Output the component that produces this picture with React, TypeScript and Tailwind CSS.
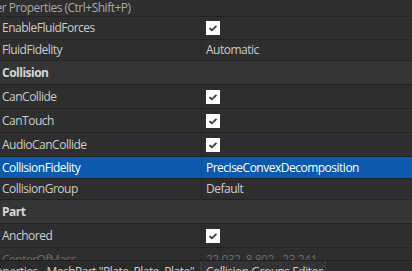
import React from "react";

type Row =
  | { kind: "cat"; name: string; h: number }
  | { kind: "bool"; name: string; h: number }
  | { kind: "text"; name: string; value: string; h: number; selected?: boolean; faded?: boolean };

const rows: Row[] = [
  { kind: "bool", name: "EnableFluidForces", h: 23 },
  { kind: "text", name: "FluidFidelity", value: "Automatic", h: 21 },
  { kind: "cat", name: "Collision", h: 24 },
  { kind: "bool", name: "CanCollide", h: 24 },
  { kind: "bool", name: "CanTouch", h: 24 },
  { kind: "bool", name: "AudioCanCollide", h: 24 },
  { kind: "text", name: "CollisionFidelity", value: "PreciseConvexDecomposition", h: 22, selected: true },
  { kind: "text", name: "CollisionGroup", value: "Default", h: 21 },
  { kind: "cat", name: "Part", h: 24 },
  { kind: "bool", name: "Anchored", h: 24 },
  { kind: "text", name: "CenterOfMass", value: "22.032, 8.802, -23.241", h: 24, faded: true },
];

function Check() {
  return (
    <div className="flex h-[14px] w-[14px] items-center justify-center bg-white">
      <svg width="10" height="8" viewBox="0 0 10 8">
        <path d="M1.5 4.2 L3.8 6.3 L8.5 1.8" fill="none" stroke="#3a3a3a" strokeWidth="1.8" />
      </svg>
    </div>
  );
}

export default function App() {
  return (
    <div
      className="flex h-[271px] w-[412px] flex-col overflow-hidden bg-[#2e2e2e] text-[12px] tracking-[-0.5px] text-[#cccccc]"
      style={{ fontFamily: '"Open Sans", sans-serif' }}
    >
      {/* Filter box */}
      <div className="flex h-[17px] shrink-0 items-center overflow-hidden border-b border-[#232323] bg-[#2e2e2e] whitespace-nowrap">
        <span className="-ml-[19px] text-[#a9a9a9]">Filter Properties (Ctrl+Shift+P)</span>
      </div>

      {/* Property rows */}
      <div className="h-[243px] shrink-0 overflow-hidden">
        {rows.map((r) => {
          if (r.kind === "cat") {
            return (
              <div
                key={r.name}
                style={{ height: r.h }}
                className="flex items-center border-b border-[#232323] bg-[#353535] pl-[2px] font-bold text-[#d8d8d8]"
              >
                {r.name}
              </div>
            );
          }
          const sel = r.kind === "text" && r.selected;
          const faded = r.kind === "text" && r.faded;
          return (
            <div
              key={r.name}
              style={{ height: r.h }}
              className={`flex border-b border-[#232323] ${sel ? "bg-[#0b5aaf] text-white" : ""} ${faded ? "text-[#6a6a6a]" : ""}`}
            >
              <div className={`flex w-[202px] shrink-0 items-center border-r pl-[2px] ${sel ? "border-[#0a4f9a]" : "border-[#262626]"}`}>
                {r.name}
              </div>
              <div className="flex flex-1 items-center pl-[4px]">
                {r.kind === "bool" ? <Check /> : r.value}
              </div>
            </div>
          );
        })}
      </div>

      {/* Bottom tabs */}
      <div className="flex h-[11px] shrink-0 items-start overflow-hidden border-t border-[#1e1e1e] bg-[#2b2b2b] whitespace-nowrap text-[#d0d0d0]">
        <div className="flex w-[200px] shrink-0 justify-end overflow-hidden pr-[6px] pt-[2px]">
          <span>Properties - MeshPart "Plate, Plate, Plate"</span>
        </div>
        <div className="flex w-[126px] shrink-0 border-x border-[#3e3e3e] bg-[#333333] pl-[5px] pt-[2px]">
          <span>Collision Groups Editor</span>
        </div>
      </div>
    </div>
  );
}
